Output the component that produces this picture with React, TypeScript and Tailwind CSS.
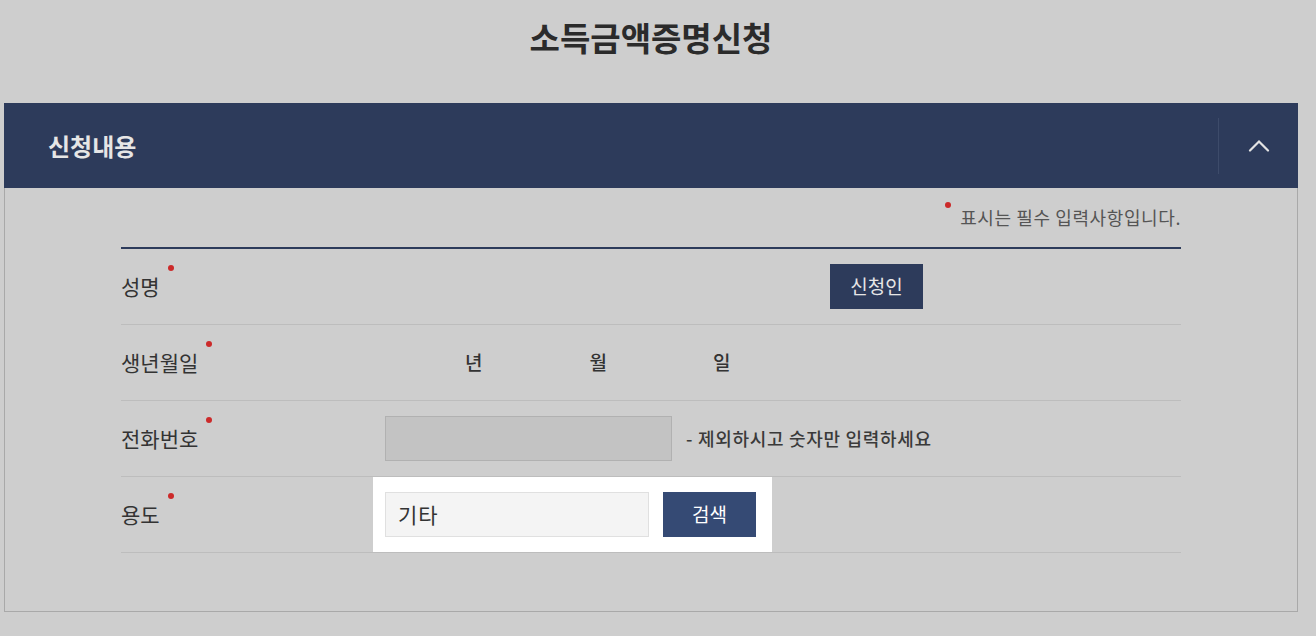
import React from "react";

const FONT = { fontFamily: '"Noto Sans CJK KR", "Noto Sans", sans-serif' };

function Required({ children }: { children: React.ReactNode }) {
  return (
    <span className="relative">
      {children}
      <span className="absolute right-[-14px] top-[-6px] w-[6px] h-[6px] rounded-full bg-[#cc2a2a]" />
    </span>
  );
}

function Row({ label, children }: { label: string; children?: React.ReactNode }) {
  return (
    <div className="flex h-[76px] border-b border-[#bdbdbd]">
      <div className="w-[252px] flex items-center text-[21px] text-[#333]">
        <Required>{label}</Required>
      </div>
      <div className="flex-1 flex items-center">{children}</div>
    </div>
  );
}

export default function App() {
  return (
    <div className="min-h-[636px] bg-[#cecece] pl-[4px]" style={FONT}>
      <div className="w-[1294px]">
        {/* Title */}
        <div className="h-[103px] pt-[13px] text-center">
          <h1 className="text-[33px] leading-[48px] font-bold text-[#2b2b2b]">소득금액증명신청</h1>
        </div>

        {/* Panel header */}
        <div className="h-[85px] bg-[#2d3b5b] flex items-center justify-between">
          <h2 className="pl-[44px] text-[24px] font-bold text-[#e6e6e6]">신청내용</h2>
          <div className="w-[80px] h-[56px] border-l border-[#3d4b6a] flex items-center justify-center">
            <svg width="22" height="13" viewBox="0 0 22 13" fill="none">
              <path d="M2 11.5 L11 2.5 L20 11.5" stroke="#e4e4e4" strokeWidth="2.2" strokeLinecap="round" />
            </svg>
          </div>
        </div>

        {/* Panel body */}
        <div className="h-[424px] border-x border-b border-[#a9a9a9] px-[116px]">
          <div className="h-[59px] flex items-center justify-end text-[18px] text-[#555] tracking-[0.6px]">
            <span className="relative pl-[15px]">
              <span className="absolute left-0 top-[-2px] w-[6px] h-[6px] rounded-full bg-[#cc2a2a]" />
              표시는 필수 입력사항입니다.
            </span>
          </div>

          <div className="border-t-2 border-[#2d3b5b]">
            <Row label="성명">
              <button className="ml-[457px] w-[93px] h-[45px] bg-[#2d3b5b] text-[#e6e6e6] text-[19px]">신청인</button>
            </Row>
            <Row label="생년월일">
              <div className="flex text-[19px] font-medium text-[#333]">
                <span className="ml-[92px]">년</span>
                <span className="ml-[107px]">월</span>
                <span className="ml-[106px]">일</span>
              </div>
            </Row>
            <Row label="전화번호">
              <div className="flex items-center gap-[14px] pl-[12px]">
                <div className="w-[287px] h-[45px] bg-[#c3c3c3] border border-[#b1b1b1]" />
                <span className="text-[18px] font-medium text-[#3a3a3a] tracking-[0.7px]">- 제외하시고 숫자만 입력하세요</span>
              </div>
            </Row>
            <Row label="용도">
              <div className="w-[399px] h-full bg-white flex items-center gap-[14px] pl-[12px]">
                <div className="w-[264px] h-[45px] bg-[#f4f4f4] border border-[#e0e0e0] flex items-center pl-[12px] text-[21px] text-[#333] tracking-[1px]">
                  기타
                </div>
                <button className="w-[93px] h-[45px] bg-[#354a74] text-white text-[19px]">검색</button>
              </div>
            </Row>
          </div>
        </div>
      </div>
    </div>
  );
}
